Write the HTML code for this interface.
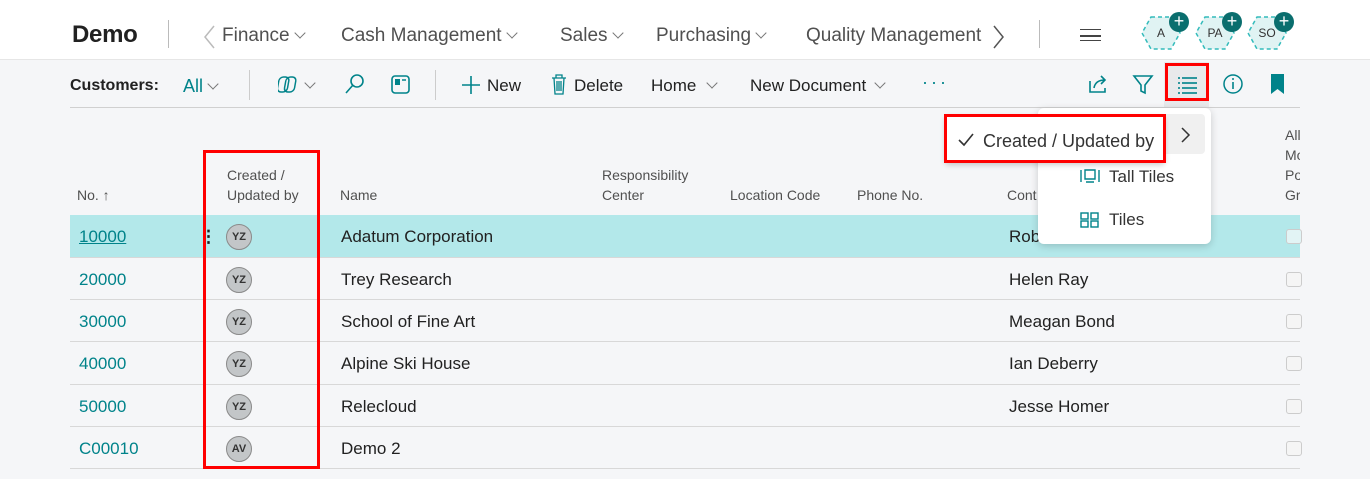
<!DOCTYPE html>
<html><head><meta charset="utf-8"><style>
*{margin:0;padding:0;box-sizing:border-box}
body{width:1370px;height:479px;overflow:hidden;background:#f5f6f8;font-family:"Liberation Sans",sans-serif;position:relative;color:#212121}
.a{position:absolute;white-space:nowrap}
.top{position:absolute;left:0;top:0;width:1370px;height:60px;background:#fff;border-bottom:1px solid #e6e6e6}
.nav{font-size:19px;color:#505050;top:25px}
.chev{display:inline-block;width:8px;height:8px;border-right:1.3px solid #777;border-bottom:1.3px solid #777;transform:rotate(45deg);margin-left:6px;position:relative;top:-4px}
.tb{font-size:17px;top:76px;color:#212121}
.hd{font-size:14px;color:#505050;line-height:20px}
.row{position:absolute;left:70px;width:1230px;height:42px;border-bottom:1px solid #d8d8d8}
.cell{position:absolute;font-size:17px;top:12px}
.no{color:#00838a}
.av{position:absolute;left:156px;top:9px;width:26px;height:26px;border-radius:50%;background:#c3c6c8;border:1px solid #8a8a8a;font-size:11px;font-weight:bold;text-align:center;line-height:24px;color:#333}
.cb{position:absolute;left:1216px;top:14px;width:16px;height:15px;border:1px solid #ccc;border-radius:3px;background:#f5f5f5}
.red{position:absolute;border:3px solid #f00}
.hexw{position:absolute;top:16px}
.hext{position:absolute;top:26px;font-size:12px;color:#333;text-align:center;width:40px}
.plus{position:absolute;top:12px;width:20px;height:20px;border-radius:50%;background:#0a6e6e;color:#fff;font-size:18px;line-height:19px;text-align:center}
</style></head><body>
<div class="top"></div>
<div class="a" style="left:72px;top:21px;font-size:24px;color:#212121;font-weight:bold;letter-spacing:-0.3px">Demo</div>
<div class="a" style="left:168px;top:20px;width:1px;height:28px;background:#bbb"></div>
<svg class="a" style="left:202px;top:24px" width="14" height="26"><path d="M12 2L3 13l9 11" fill="none" stroke="#bbb" stroke-width="1.5"/></svg>
<div class="a nav" style="left:222px">Finance<span class="chev"></span></div>
<div class="a nav" style="left:341px">Cash Management<span class="chev"></span></div>
<div class="a nav" style="left:560px">Sales<span class="chev"></span></div>
<div class="a nav" style="left:656px">Purchasing<span class="chev"></span></div>
<div class="a nav" style="left:806px;width:182px;overflow:hidden">Quality Management</div>
<svg class="a" style="left:992px;top:24px" width="14" height="26"><path d="M2 2l9 11-9 11" fill="none" stroke="#555" stroke-width="1.5"/></svg>
<div class="a" style="left:1039px;top:20px;width:1px;height:28px;background:#bbb"></div>
<div class="a" style="left:1080px;top:29px;width:21px;height:12px;border-top:1.5px solid #444;border-bottom:1.5px solid #444"></div>
<div class="a" style="left:1080px;top:35px;width:21px;height:1.5px;background:#444"></div>
<svg class="hexw" style="left:1141px" width="40" height="34"><path d="M10 1h20l9 16-9 16H10L1 17z" fill="#e0f3f3" stroke="#3bb" stroke-width="1.5" stroke-dasharray="4 3"/></svg><div class="hext" style="left:1141px">A</div><div class="plus" style="left:1169px">+</div>
<svg class="hexw" style="left:1195px" width="40" height="34"><path d="M10 1h20l9 16-9 16H10L1 17z" fill="#e0f3f3" stroke="#3bb" stroke-width="1.5" stroke-dasharray="4 3"/></svg><div class="hext" style="left:1195px">PA</div><div class="plus" style="left:1222px">+</div>
<svg class="hexw" style="left:1247px" width="40" height="34"><path d="M10 1h20l9 16-9 16H10L1 17z" fill="#e0f3f3" stroke="#3bb" stroke-width="1.5" stroke-dasharray="4 3"/></svg><div class="hext" style="left:1247px">SO</div><div class="plus" style="left:1274px">+</div>

<div class="a tb" style="left:70px;font-weight:bold;font-size:16px;top:77px">Customers:</div>
<div class="a tb" style="left:183px;color:#00838a;font-size:18px">All<span class="chev"></span></div>
<div class="a" style="left:249px;top:70px;width:1px;height:30px;background:#ccc"></div>
<svg class="a" style="left:278px;top:74px" width="22" height="22"><rect x="2" y="3" width="10" height="15" rx="4" fill="none" stroke="#00838a" stroke-width="1.5" transform="skewX(-10)"/><rect x="9" y="3" width="10" height="15" rx="4" fill="none" stroke="#00838a" stroke-width="1.5" transform="skewX(-10)"/></svg>
<div class="a tb" style="left:300px"><span class="chev"></span></div>
<svg class="a" style="left:344px;top:73px" width="22" height="22"><circle cx="13" cy="8" r="6" fill="none" stroke="#00838a" stroke-width="1.6"/><line x1="9" y1="12" x2="2" y2="20" stroke="#00838a" stroke-width="1.6"/></svg>
<svg class="a" style="left:390px;top:74px" width="22" height="22"><rect x="2" y="2" width="17" height="17" rx="3" fill="none" stroke="#00838a" stroke-width="1.6"/><rect x="5" y="5" width="5" height="6" fill="#00838a"/><line x1="12" y1="6" x2="16" y2="6" stroke="#00838a" stroke-width="1.5"/></svg>
<div class="a" style="left:435px;top:70px;width:1px;height:30px;background:#ccc"></div>
<svg class="a" style="left:461px;top:75px" width="20" height="20"><path d="M10 1v18M1 10h18" stroke="#00838a" stroke-width="1.6"/></svg>
<div class="a tb" style="left:487px">New</div>
<svg class="a" style="left:551px;top:74px" width="16" height="21"><path d="M1 4h14M5 4V1h6v3M3 4l1 16h8l1-16M6 7v10M8 7v10M10 7v10" fill="none" stroke="#00838a" stroke-width="1.3"/></svg>
<div class="a tb" style="left:574px">Delete</div>
<div class="a tb" style="left:651px">Home<span class="chev" style="margin-left:12px"></span></div>
<div class="a tb" style="left:750px">New Document<span class="chev" style="margin-left:10px"></span></div>
<div class="a tb" style="left:922px;color:#00838a;top:72px;letter-spacing:3px;font-size:18px">···</div>
<svg class="a" style="left:1087px;top:73px" width="22" height="22"><path d="M3 8v11h15v-4" fill="none" stroke="#00838a" stroke-width="1.6"/><path d="M7 15c1-6 5-8 11-8M14 3l4 4-4 4" fill="none" stroke="#00838a" stroke-width="1.6"/></svg>
<svg class="a" style="left:1132px;top:73px" width="22" height="22"><path d="M2 3h18l-7 9v8l-4-2v-6z" fill="none" stroke="#00838a" stroke-width="1.6"/></svg>
<div class="a" style="left:1164px;top:62px;width:45px;height:46px;background:#e8e9eb"></div>
<svg class="a" style="left:1177px;top:75px" width="22" height="20"><g stroke="#00838a" stroke-width="1.6"><line x1="1" y1="3" x2="3" y2="3"/><line x1="5" y1="3" x2="20" y2="3"/><line x1="1" y1="8" x2="3" y2="8"/><line x1="5" y1="8" x2="20" y2="8"/><line x1="1" y1="13" x2="3" y2="13"/><line x1="5" y1="13" x2="20" y2="13"/><line x1="1" y1="18" x2="3" y2="18"/><line x1="5" y1="18" x2="20" y2="18"/></g></svg>
<div class="red" style="left:1165px;top:63px;width:44px;height:38px"></div>
<svg class="a" style="left:1222px;top:73px" width="22" height="22"><circle cx="11" cy="11" r="9" fill="none" stroke="#00838a" stroke-width="1.5"/><line x1="11" y1="9" x2="11" y2="16" stroke="#00838a" stroke-width="1.6"/><circle cx="11" cy="6" r="1" fill="#00838a"/></svg>
<svg class="a" style="left:1270px;top:73px" width="16" height="22"><path d="M1 1h13v20l-6.5-5-6.5 5z" fill="#00838a"/></svg>
<div class="a" style="left:70px;top:107px;width:1230px;height:1px;background:#d0d0d0"></div>

<div class="a hd" style="left:77px;top:185px">No. &#x2191;</div>
<div class="a hd" style="left:227px;top:165px">Created /<br>Updated by</div>
<div class="a hd" style="left:340px;top:185px">Name</div>
<div class="a hd" style="left:602px;top:165px">Responsibility<br>Center</div>
<div class="a hd" style="left:730px;top:185px">Location Code</div>
<div class="a hd" style="left:857px;top:185px">Phone No.</div>
<div class="a hd" style="left:1007px;top:185px">Cont</div>
<div class="a hd" style="left:1285px;top:125px;width:15px;overflow:hidden">All<br>Mo<br>Po<br>Gr</div>

<div class="row" style="top:215px;height:43px;background:#b3e8ea"><div class="cell no" style="left:9px;text-decoration:underline">10000</div><div class="cell" style="left:130px;font-weight:bold">⋮</div><div class="av">YZ</div><div class="cell" style="left:271px">Adatum Corporation</div><div class="cell" style="left:939px">Rob</div><div class="cb" style="background:#e2f4f5"></div></div>
<div class="row" style="top:258px"><div class="cell no" style="left:9px">20000</div><div class="av">YZ</div><div class="cell" style="left:271px">Trey Research</div><div class="cell" style="left:939px">Helen Ray</div><div class="cb"></div></div>
<div class="row" style="top:300px"><div class="cell no" style="left:9px">30000</div><div class="av">YZ</div><div class="cell" style="left:271px">School of Fine Art</div><div class="cell" style="left:939px">Meagan Bond</div><div class="cb"></div></div>
<div class="row" style="top:342px;height:43px"><div class="cell no" style="left:9px">40000</div><div class="av">YZ</div><div class="cell" style="left:271px">Alpine Ski House</div><div class="cell" style="left:939px">Ian Deberry</div><div class="cb"></div></div>
<div class="row" style="top:385px"><div class="cell no" style="left:9px">50000</div><div class="av">YZ</div><div class="cell" style="left:271px">Relecloud</div><div class="cell" style="left:939px">Jesse Homer</div><div class="cb"></div></div>
<div class="row" style="top:427px"><div class="cell no" style="left:9px">C00010</div><div class="av">AV</div><div class="cell" style="left:271px">Demo 2</div><div class="cb"></div></div>

<div class="red" style="left:203px;top:150px;width:117px;height:319px"></div>

<div class="a" style="left:1038px;top:108px;width:173px;height:136px;background:#fff;border-radius:6px;box-shadow:0 2px 8px rgba(0,0,0,.18)"></div>
<div class="a" style="left:1040px;top:114px;width:165px;height:40px;background:#f0f0f0;border-radius:4px"></div>
<svg class="a" style="left:1180px;top:126px" width="12" height="18"><path d="M2 2l7 7-7 7" fill="none" stroke="#333" stroke-width="1.5"/></svg>
<svg class="a" style="left:1080px;top:168px" width="20" height="16"><path d="M1 2v12M19 2v12M5 2h10v9H5zM6 14h8" fill="none" stroke="#00838a" stroke-width="1.4"/></svg>
<div class="a" style="left:1109px;top:167px;font-size:17px;color:#333">Tall Tiles</div>
<svg class="a" style="left:1080px;top:212px" width="20" height="16"><g fill="none" stroke="#00838a" stroke-width="1.4"><rect x="1" y="1" width="7" height="6"/><rect x="11" y="1" width="7" height="6"/><rect x="1" y="9" width="7" height="6"/><rect x="11" y="9" width="7" height="6"/></g></svg>
<div class="a" style="left:1109px;top:210px;font-size:17px;color:#333">Tiles</div>
<div class="a" style="left:945px;top:115px;width:220px;height:48px;background:#fff;border-radius:4px;box-shadow:0 2px 6px rgba(0,0,0,.2)"></div>
<svg class="a" style="left:958px;top:133px" width="16" height="14"><path d="M1 7l5 5 9-11" fill="none" stroke="#333" stroke-width="1.6"/></svg>
<div class="a" style="left:983px;top:131px;font-size:18px;color:#333">Created / Updated by</div>
<div class="red" style="left:944px;top:114px;width:222px;height:49px"></div>
</body></html>
